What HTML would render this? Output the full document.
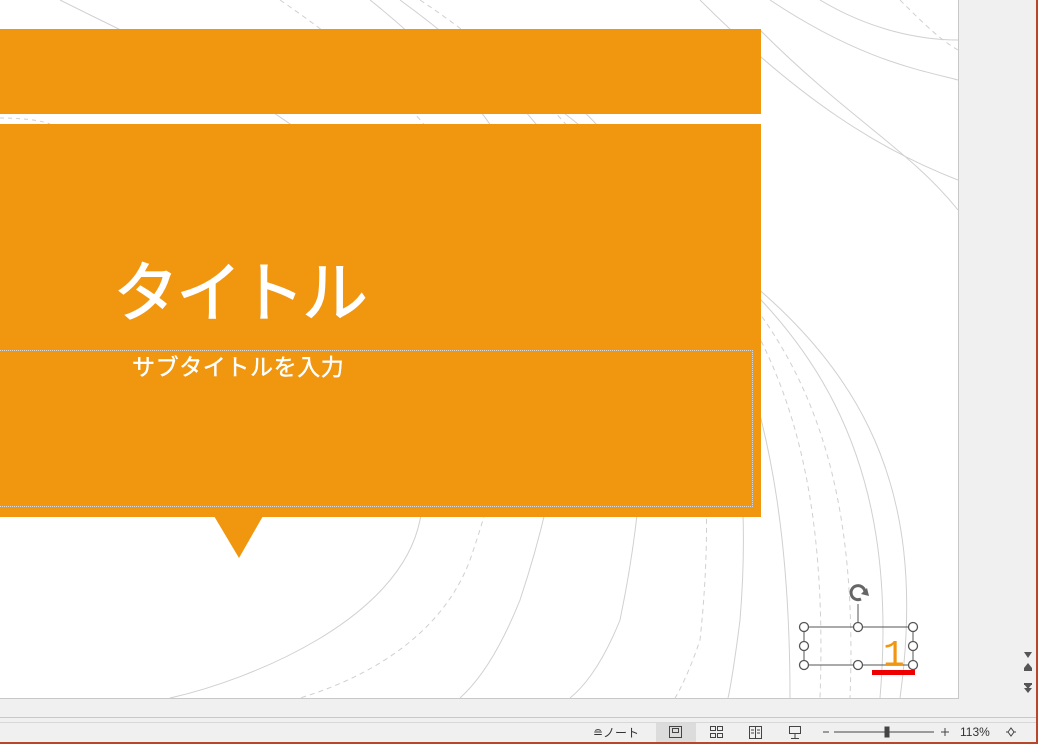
<!DOCTYPE html>
<html><head><meta charset="utf-8"><style>
body{margin:0;width:1038px;height:744px;overflow:hidden;background:#f0f0f0;font-family:"Liberation Sans","Noto Sans CJK JP",sans-serif;position:relative}
.abs{position:absolute}
</style></head><body>
<div class="abs" style="left:0;top:0;width:958px;height:698px;background:#fff;border-right:1px solid #c8c8c8;border-bottom:1px solid #c8c8c8"></div>
<svg class="abs" style="left:0;top:0" width="958" height="698" fill="none" stroke="#d0d0d0" stroke-width="1">
<path d="M60 0 C300 120 480 180 420 520 C400 620 250 680 170 698"/>
<path d="M280 0 C500 150 560 300 470 560 C440 640 360 680 300 698" stroke-dasharray="5 4"/>
<path d="M370 0 C560 150 610 330 520 600 C500 650 480 680 460 698"/>
<path d="M400 0 C620 160 680 330 620 620 C600 670 580 690 570 698"/>
<path d="M420 0 C660 160 730 360 700 640 C690 670 680 690 675 698" stroke-dasharray="5 4"/>
<path d="M560 90 C690 200 760 380 740 620 C735 660 730 690 728 698"/>
<path d="M560 110 C720 230 790 400 790 698"/>
<path d="M600 150 C760 280 830 420 820 698" stroke-dasharray="5 4"/>
<path d="M620 180 C790 300 860 440 850 698" stroke-dasharray="5 4"/>
<path d="M640 200 C820 320 900 460 880 698"/>
<path d="M680 230 C860 350 930 480 900 698"/>
<path d="M760 30 C850 120 910 150 958 210"/>
<path d="M700 0 C800 100 880 150 958 180"/>
<path d="M900 0 C920 20 940 40 958 50" stroke-dasharray="5 4"/>
<path d="M770 0 C860 60 920 70 958 80"/>
<path d="M820 0 C870 30 920 40 958 40"/>
<path d="M0 118 C20 118 40 120 50 124" stroke-dasharray="4 4"/>
</svg>
<div class="abs" style="left:0;top:29px;width:761px;height:85px;background:#f0960f"></div>
<div class="abs" style="left:0;top:124px;width:761px;height:393px;background:#f0960f"></div>
<svg class="abs" style="left:214px;top:516px" width="50" height="43"><polygon points="0,0 49,0 25,42" fill="#f0960f"/></svg>
<div class="abs" style="left:0;top:350px;width:752px;height:155px;border:1px dotted #d8d8d8;border-left:none"></div>
<div class="abs" style="left:113px;top:243px;color:#fff;font-size:66px;line-height:100px;letter-spacing:-3px;-webkit-text-stroke:1px #fff">タイトル</div>
<div class="abs" style="left:132px;top:352px;color:#fff;font-size:23px;line-height:30px;letter-spacing:0.6px;-webkit-text-stroke:0.4px #fff">サブタイトルを入力</div>
<svg class="abs" style="left:795px;top:580px" width="130" height="100">
<rect x="9" y="47" width="109" height="38" fill="none" stroke="#555" stroke-width="1"/>
<line x1="63" y1="24" x2="63" y2="47" stroke="#555"/>
<path d="M70 12 A7 7 0 1 0 66 19" fill="none" stroke="#666" stroke-width="3"/>
<polygon points="72,8 74,16 66,14" fill="#666"/>
<g fill="#fff" stroke="#555" stroke-width="1.3">
<circle cx="9" cy="47" r="4.5"/><circle cx="63" cy="47" r="4.5"/><circle cx="118" cy="47" r="4.5"/>
<circle cx="9" cy="66" r="4.5"/><circle cx="118" cy="66" r="4.5"/>
<circle cx="9" cy="85" r="4.5"/><circle cx="63" cy="85" r="4.5"/><circle cx="118" cy="85" r="4.5"/></g>
<rect x="77" y="90" width="43" height="5" fill="#ee0000"/>
<text x="88" y="85" font-family="Liberation Mono" font-size="36" fill="#f0960f">1</text>
</svg>
<div class="abs" style="left:1020px;top:0;width:17px;height:718px;background:#f0f0f0"></div>
<svg class="abs" style="left:1022px;top:650px" width="14" height="44" fill="#555">
<polygon points="2,2 10,2 6,8"/>
<polygon points="6,13 10,18 2,18"/><rect x="2" y="18" width="8" height="3"/>
<rect x="2" y="33" width="8" height="2"/><polygon points="2,34 10,34 6,39"/><polygon points="2,38 10,38 6,43"/>
</svg>
<div class="abs" style="left:0;top:717px;width:1038px;height:1px;background:#c8c8c8"></div>
<div class="abs" style="left:0;top:722px;width:1038px;height:21px;background:#f0f0f0;border-top:1px solid #d8d8d8"></div>
<div class="abs" style="left:656px;top:723px;width:40px;height:20px;background:#dcdcdc"></div>
<div class="abs" style="left:593px;top:724px;font-size:12px;color:#333">≘ノート</div>
<svg class="abs" style="left:668px;top:725px" width="370" height="16" fill="none" stroke="#444">
<rect x="1.5" y="1.5" width="12" height="11"/><rect x="4.5" y="3.5" width="6" height="4"/>
<rect x="42.5" y="1.5" width="5" height="4"/><rect x="49.5" y="1.5" width="5" height="4"/><rect x="42.5" y="8.5" width="5" height="4"/><rect x="49.5" y="8.5" width="5" height="4"/>
<path d="M81.5 1.5h12v12h-12zM87.5 1.5v12M83 5h3M89 5h3M83 8h3M89 8h3"/>
<path d="M121.5 1.5h11v7h-11zM127 8.5v5M123 13.5h8"/>
<path d="M155 7h6M166 7h100M273 7h8M277 3v8"/>
<rect x="217" y="2" width="4" height="10" fill="#444"/>
<path d="M340 7l3-4l3 4l-3 4zM338 7h2M346 7h2"/>
</svg>
<div class="abs" style="left:960px;top:725px;font-size:12px;color:#333">113%</div>
<div class="abs" style="left:1036px;top:0;width:2px;height:744px;background:#b7472a"></div>
<div class="abs" style="left:0;top:742px;width:1038px;height:2px;background:#b7472a"></div>
</body></html>
